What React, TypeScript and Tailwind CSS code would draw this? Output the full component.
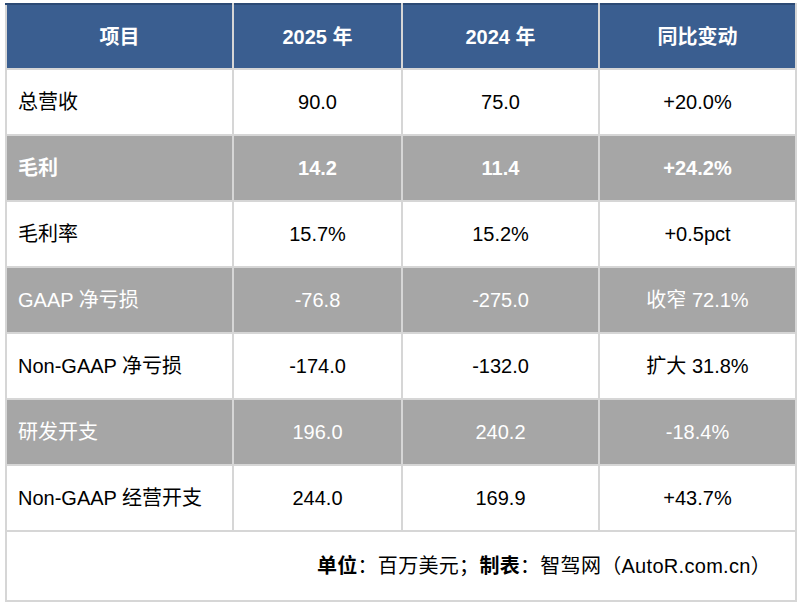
const rows = [
  { name: "总营收", a: "90.0", b: "75.0", c: "+20.0%", gray: false, bold: false },
  { name: "毛利", a: "14.2", b: "11.4", c: "+24.2%", gray: true, bold: true },
  { name: "毛利率", a: "15.7%", b: "15.2%", c: "+0.5pct", gray: false, bold: false },
  { name: "GAAP 净亏损", a: "-76.8", b: "-275.0", c: "收窄 72.1%", gray: true, bold: false },
  { name: "Non-GAAP 净亏损", a: "-174.0", b: "-132.0", c: "扩大 31.8%", gray: false, bold: false },
  { name: "研发开支", a: "196.0", b: "240.2", c: "-18.4%", gray: true, bold: false },
  { name: "Non-GAAP 经营开支", a: "244.0", b: "169.9", c: "+43.7%", gray: false, bold: false },
];

export default function App() {
  return (
    <div
      className="w-[800px] h-[604px] bg-white pt-[3px] pl-[5px]"
      style={{ fontFamily: '"Liberation Sans", Arial, "Noto Sans CJK SC", sans-serif' }}
    >
      <table className="table-fixed border-collapse w-[790px] text-[20px] text-black">
        <colgroup>
          <col className="w-[227px]" />
          <col className="w-[169px]" />
          <col className="w-[197px]" />
          <col className="w-[197px]" />
        </colgroup>
        <thead>
          <tr className="h-[65px] bg-[#3a5e90] text-white font-bold border-t-2 border-t-[#2c4a75]">
            <th className="border-2 border-[#d6d6d6] border-t-[#2c4a75] text-center">项目</th>
            <th className="border-2 border-[#d6d6d6] border-t-[#2c4a75] text-center">2025 年</th>
            <th className="border-2 border-[#d6d6d6] border-t-[#2c4a75] text-center">2024 年</th>
            <th className="border-2 border-[#d6d6d6] border-t-[#2c4a75] text-center">同比变动</th>
          </tr>
        </thead>
        <tbody>
          {rows.map((r) => (
            <tr
              key={r.name}
              className={`h-[66px] ${r.gray ? "bg-[#a6a6a6] text-white" : "bg-white"} ${
                r.bold ? "font-bold" : ""
              }`}
            >
              <td className="border-2 border-[#d6d6d6] pl-[11px]">{r.name}</td>
              <td className="border-2 border-[#d6d6d6] text-center">{r.a}</td>
              <td className="border-2 border-[#d6d6d6] text-center">{r.b}</td>
              <td className="border-2 border-[#d6d6d6] text-center">{r.c}</td>
            </tr>
          ))}
          <tr className="h-[70px]">
            <td
              colSpan={4}
              className="border-2 border-[#d6d6d6] text-right pr-[24px] text-[20px] tracking-[0.3px]"
            >
              <span className="font-bold">单位</span>：百万美元；<span className="font-bold">制表</span>：智驾网（AutoR.com.cn）
            </td>
          </tr>
        </tbody>
      </table>
    </div>
  );
}
